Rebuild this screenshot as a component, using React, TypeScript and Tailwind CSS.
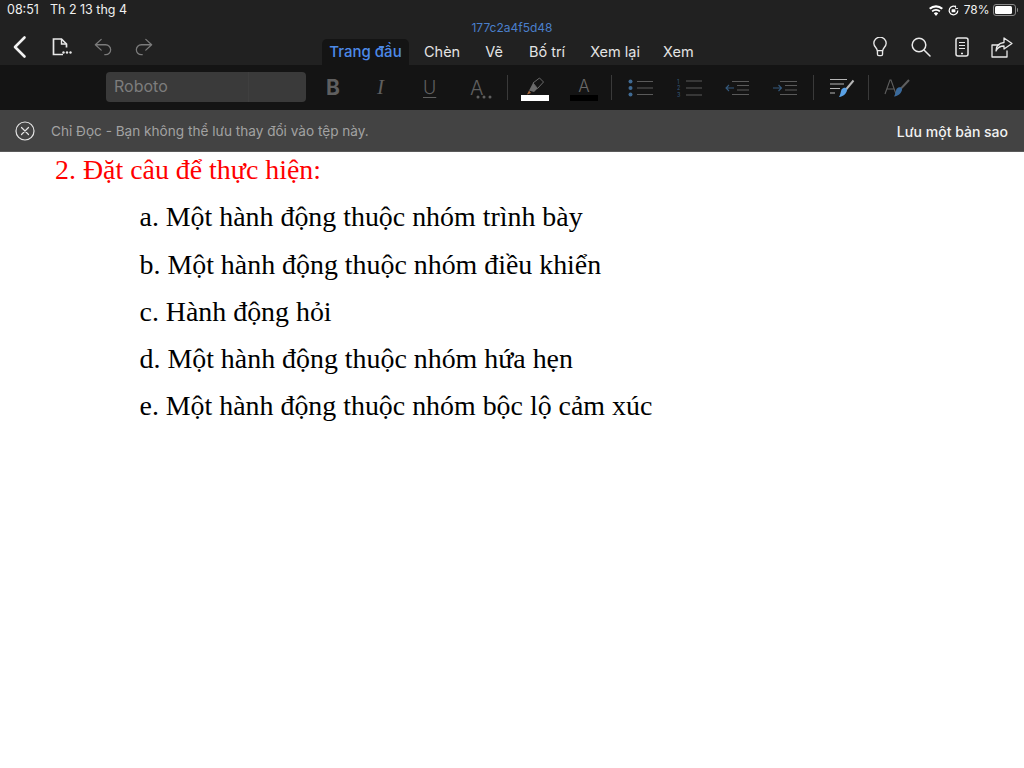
const ui = { fontFamily: 'Inter, "Noto Sans", sans-serif' };

function Back() {
  return <svg width="16" height="24" viewBox="0 0 16 24" fill="none" stroke="#f2f2f2" strokeWidth="2.6" strokeLinecap="round" strokeLinejoin="round"><path d="M12.5 2.5 3 12l9.5 9.5" /></svg>;
}
function DocIcon() {
  return <svg width="20" height="18" viewBox="0 0 20 18" fill="none"><path d="M11 16.500H1.500V1h8l5 5v3.500" stroke="#e8e8e8" strokeWidth="1.700" /><path d="M9.500 1v5h5" stroke="#e8e8e8" strokeWidth="1.400" /><circle cx="11.500" cy="14.500" r="1.200" fill="#e8e8e8" /><circle cx="15" cy="14.500" r="1.200" fill="#e8e8e8" /><circle cx="18.500" cy="14.500" r="1.200" fill="#e8e8e8" /></svg>;
}
function Undo({ flip }: { flip?: boolean }) {
  return <svg width="18" height="18" viewBox="0 0 20 20" fill="none" stroke="#7b7b7b" strokeWidth="1.400" strokeLinecap="round" strokeLinejoin="round" style={flip ? { transform: 'scaleX(-1)' } : undefined}><path d="M8 1.500 1.500 7.500 8 13.500M1.500 7.500H13a5.300 5.300 0 0 1 0 11h-1" /></svg>;
}
function Bulb() {
  return <svg width="16" height="20" viewBox="0 0 16 22" fill="none" stroke="#e8e8e8" strokeWidth="1.500" strokeLinecap="round"><path d="M5 15c0-3-3.800-4-3.800-8A6.800 6.800 0 0 1 14.800 7c0 4-3.800 5-3.800 8ZM5.200 15v4a1.500 1.500 0 0 0 1.500 1.500h2.600a1.500 1.500 0 0 0 1.500-1.500v-4" /></svg>;
}
function Search() {
  return <svg width="20" height="20" viewBox="0 0 20 20" fill="none" stroke="#e8e8e8" strokeWidth="1.500" strokeLinecap="round"><circle cx="8" cy="8" r="6.800" /><path d="m13 13 6 6" /></svg>;
}
function Tablet() {
  return <svg width="14" height="20" viewBox="0 0 14 20" fill="none" stroke="#e8e8e8"><rect x="1" y="1" width="12" height="18" rx="2" strokeWidth="1.500" /><path d="M4 5.500h6M4 8.500h6M4 11.500h6" strokeWidth="1.200" /><path d="M6 16.500h2" strokeWidth="1.500" /></svg>;
}
function Share() {
  return <svg width="22" height="21" viewBox="0 0 22 21" fill="none" stroke="#e8e8e8" strokeWidth="1.300" strokeLinejoin="round" strokeLinecap="round"><path d="M8 8H1v12h15v-6" /><path d="M13 1l8 5.500-8 5.500V9c-4 0-6.500 1.500-8 5 0-5 3-8 8-8.500Z" /></svg>;
}
function Lines({ dots }: { dots?: boolean }) {
  return <svg width="26" height="18" viewBox="0 0 26 18" fill="none">
    {dots && <g fill="#3f6a93"><circle cx="2.500" cy="2.500" r="2" /><circle cx="2.500" cy="9" r="2" /><circle cx="2.500" cy="15.500" r="2" /></g>}
    <path d="M9 2.500h16M9 9h16M9 15.500h16" stroke="#5a5a5a" strokeWidth="1.100" />
  </svg>;
}
function Numbered() {
  return <svg width="26" height="20" viewBox="0 0 26 20" fill="none">
    <text x="0" y="6" fontSize="5.500" fill="#34597d" fontFamily="Inter">1</text>
    <text x="0" y="12" fontSize="5.500" fill="#34597d" fontFamily="Inter">2</text>
    <text x="0" y="19" fontSize="5.500" fill="#34597d" fontFamily="Inter">3</text>
    <path d="M9 3h16M9 10h16M9 17h16" stroke="#5a5a5a" strokeWidth="1.100" />
  </svg>;
}
function Indent({ right }: { right?: boolean }) {
  return <svg width="26" height="16" viewBox="0 0 26 16" fill="none">
    <path d="M8 1.500h17M13 5.500h12M13 10h12M8 14.500h17" stroke="#5a5a5a" strokeWidth="1.100" />
    {right
      ? <path d="M1 8h8M6.500 5 9.500 8l-3 3" stroke="#34597d" strokeWidth="1.100" />
      : <path d="M10 8H2M5 5 2 8l3 3" stroke="#34597d" strokeWidth="1.100" />}
  </svg>;
}
function Styles() {
  return <svg width="26" height="20" viewBox="0 0 26 20" fill="none">
    <path d="M1 1.500h17M1 6h14M1 10.500h10M1 15h5" stroke="#b5b5b5" strokeWidth="1.200" />
    <path d="M24.500 2.500 17 11.500" stroke="#b5b5b5" strokeWidth="2" />
    <path d="M12.500 11.500c2-2.500 5-2 5.500 0 .3 3-3 7-8 7.500 1.500-2 1.500-5 2.500-7.500Z" fill="#5ba2e6" />
  </svg>;
}
function APaint() {
  return <svg width="26" height="20" viewBox="0 0 26 20" fill="none">
    <path d="M1 16 6 2h1l5 14M3 11h7" stroke="#5f5f5f" strokeWidth="1.100" />
    <path d="M25 2 17 10.500" stroke="#5f5f5f" strokeWidth="2" />
    <path d="M12.500 11c2-2.500 5-2 5.500 0 .3 3-3 7-8 7.500 1.500-2 1.500-5 2.500-7.500Z" fill="#3a6a9c" />
  </svg>;
}
function Marker() {
  return <svg width="20" height="18" viewBox="0 0 20 18" fill="none">
    <path d="M8 6 14.500 1l4 4-6 6.500Z" stroke="#6a6a6a" strokeWidth="1" />
    <path d="M8 6l4.500 5.500-3.500 3.500-5-1.500Z" fill="#6a6a6a" />
    <path d="M4 13.500 2 17.500l4-1.500Z" fill="#a9663a" />
  </svg>;
}
function Wifi() {
  return <svg width="14" height="11" viewBox="0 0 14 11"><path d="M7 11 4.800 8.300a3.300 3.300 0 0 1 4.400 0ZM3.700 7.100 2.500 5.700a6.800 6.800 0 0 1 9 0l-1.200 1.400a5 5 0 0 0-6.600 0ZM1.500 4.600 0 3a10.400 10.400 0 0 1 14 0l-1.500 1.600a8.400 8.400 0 0 0-11 0Z" fill="#fff" /></svg>;
}
function Lock() {
  return <svg width="11" height="11" viewBox="0 0 11 11" fill="none"><path d="M9.800 5.500A4.300 4.300 0 1 1 8 2" stroke="#fff" strokeWidth="1.200" /><path d="M7.500.5v3h2.500" stroke="#fff" strokeWidth=".8" /><rect x="3.600" y="4.200" width="3.800" height="3" rx=".5" fill="#fff" /></svg>;
}
function Battery() {
  return <div className="flex items-center gap-px">
    <div className="w-[23px] h-[12px] rounded-[3px] border border-[#8a8a8a] p-px"><div className="w-[17px] h-full bg-white rounded-[1.500px]" /></div>
    <div className="w-[1.500px] h-[4px] bg-[#8a8a8a] rounded-r-sm" />
  </div>;
}
function CloseCircle() {
  return <svg width="20" height="20" viewBox="0 0 20 20" fill="none" stroke="#e3e3e3" strokeWidth="1.200" strokeLinecap="round"><circle cx="10" cy="10" r="9" /><path d="m6.500 6.500 7 7M13.500 6.500l-7 7" /></svg>;
}
function Sep() {
  return <div className="w-px h-[25px] bg-[#3a3a3a]" />;
}
function Dots() {
  return <svg width="16" height="4" viewBox="0 0 16 4" fill="#5f5f5f"><circle cx="2" cy="2" r="1.500" /><circle cx="8" cy="2" r="1.500" /><circle cx="14" cy="2" r="1.500" /></svg>;
}

const items = [
  'a. Một hành động thuộc nhóm trình bày',
  'b. Một hành động thuộc nhóm điều khiển',
  'c. Hành động hỏi',
  'd. Một hành động thuộc nhóm hứa hẹn',
  'e. Một hành động thuộc nhóm bộc lộ cảm xúc',
];

export default function App() {
  return (
    <div className="w-[1024px] h-[768px] overflow-hidden bg-white flex flex-col">
      <header className="h-[65px] bg-[#212121] flex flex-col" style={ui}>
        <div className="h-[20px] px-[7px] flex items-center text-[12.500px] text-[#f0f0f0]">
          <span>08:51</span>
          <span className="ml-[11px]">Th 2 13 thg 4</span>
          <div className="ml-auto flex items-center -mr-[1px]">
            <Wifi />
            <div className="ml-[5px]"><Lock /></div>
            <span className="ml-[5px] text-[12px]">78%</span>
            <div className="ml-[3px]"><Battery /></div>
          </div>
        </div>
        <div className="h-[15px] flex items-center justify-center text-[12px] text-[#4a7fcb]">177c2a4f5d48</div>
        <div className="flex-1 flex items-end">
          <div className="w-[322px] flex items-center self-center pl-[12px] -mt-[6px]">
            <Back />
            <div className="ml-[24px]"><DocIcon /></div>
            <div className="ml-[22px]"><Undo /></div>
            <div className="ml-[23px]"><Undo flip /></div>
          </div>
          <nav className="flex items-end text-[14.500px] text-[#e4e4e4] h-full">
            <div className="h-[26px] w-[87px] bg-[#141414] rounded-t-[5px] flex items-center justify-center text-[15px] text-[#4d8ae8] font-medium">Trang đầu</div>
            <span className="ml-[15px] mb-[2px]">Chèn</span>
            <span className="ml-[25px] mb-[2px]">Vẽ</span>
            <span className="ml-[26px] mb-[2px]">Bố trí</span>
            <span className="ml-[25px] mb-[2px]">Xem lại</span>
            <span className="ml-[23px] mb-[2px]">Xem</span>
          </nav>
          <div className="ml-auto self-center -mt-[6px] flex items-center pr-[11px]">
            <Bulb />
            <div className="ml-[23px]"><Search /></div>
            <div className="ml-[24px]"><Tablet /></div>
            <div className="ml-[22px]"><Share /></div>
          </div>
        </div>
      </header>

      <div className="h-[45px] bg-[#141414] flex items-center pl-[106px]" style={ui}>
        <div className="w-[200px] h-[30px] -mt-[2px] rounded-[4px] bg-[#3a3a3a] flex items-stretch text-[16px] text-[#7d7d7d]">
          <div className="w-[143px] pl-[8px] pb-px flex items-center border-r border-[#3f3f3f]">Roboto</div>
        </div>
        <span className="ml-[20px] w-[14px] text-[21px] font-bold text-[#5f5f5f]">B</span>
        <span className="ml-[37px] w-[8px] text-[21px] italic text-[#5f5f5f]" style={{ fontFamily: '"Liberation Serif", serif' }}>I</span>
        <span className="ml-[38px] w-[16px] text-[18px] font-light text-[#5f5f5f] underline underline-offset-[3px]">U</span>
        <div className="ml-[31px] w-[26px] flex items-end text-[20px] font-light text-[#5f5f5f]">
          <span>A</span>
          <div className="mb-[4px] -ml-[7px]"><Dots /></div>
        </div>
        <div className="ml-[11px]"><Sep /></div>
        <div className="ml-[13px] w-[28px] flex flex-col items-center mt-[2px]">
          <Marker />
          <div className="w-[28px] h-[6px] bg-white" />
        </div>
        <div className="ml-[21px] w-[28px] flex flex-col items-center mt-[2px]">
          <span className="text-[17px] leading-[18px] font-light text-[#6a6a6a]">A</span>
          <div className="w-[28px] h-[6px] bg-black" />
        </div>
        <div className="ml-[13px]"><Sep /></div>
        <div className="ml-[16px]"><Lines dots /></div>
        <div className="ml-[23px]"><Numbered /></div>
        <div className="ml-[21px]"><Indent /></div>
        <div className="ml-[22px]"><Indent right /></div>
        <div className="ml-[15px]"><Sep /></div>
        <div className="ml-[15px]"><Styles /></div>
        <div className="ml-[13px]"><Sep /></div>
        <div className="ml-[15px]"><APaint /></div>
      </div>

      <div className="h-[42px] bg-[#434343] border-b border-[#5a5a5a] flex items-center pl-[15px] pr-[16px] pt-px" style={ui}>
        <CloseCircle />
        <span className="ml-[16px] text-[13.600px] text-[#a2a2a2]">Chỉ Đọc - Bạn không thể lưu thay đổi vào tệp này.</span>
        <span className="ml-auto text-[14px] font-medium text-[#f2f2f2]">Lưu một bản sao</span>
      </div>

      <main className="flex-1 bg-white text-[27.900px] leading-[47.250px]" style={{ fontFamily: '"Liberation Serif", serif' }}>
        <p className="pl-[55px] text-[#ff0000] -mt-[6px]">2. Đặt câu để thực hiện:</p>
        {items.map((t) => <p key={t} className="pl-[139.500px] text-black">{t}</p>)}
      </main>
    </div>
  );
}
